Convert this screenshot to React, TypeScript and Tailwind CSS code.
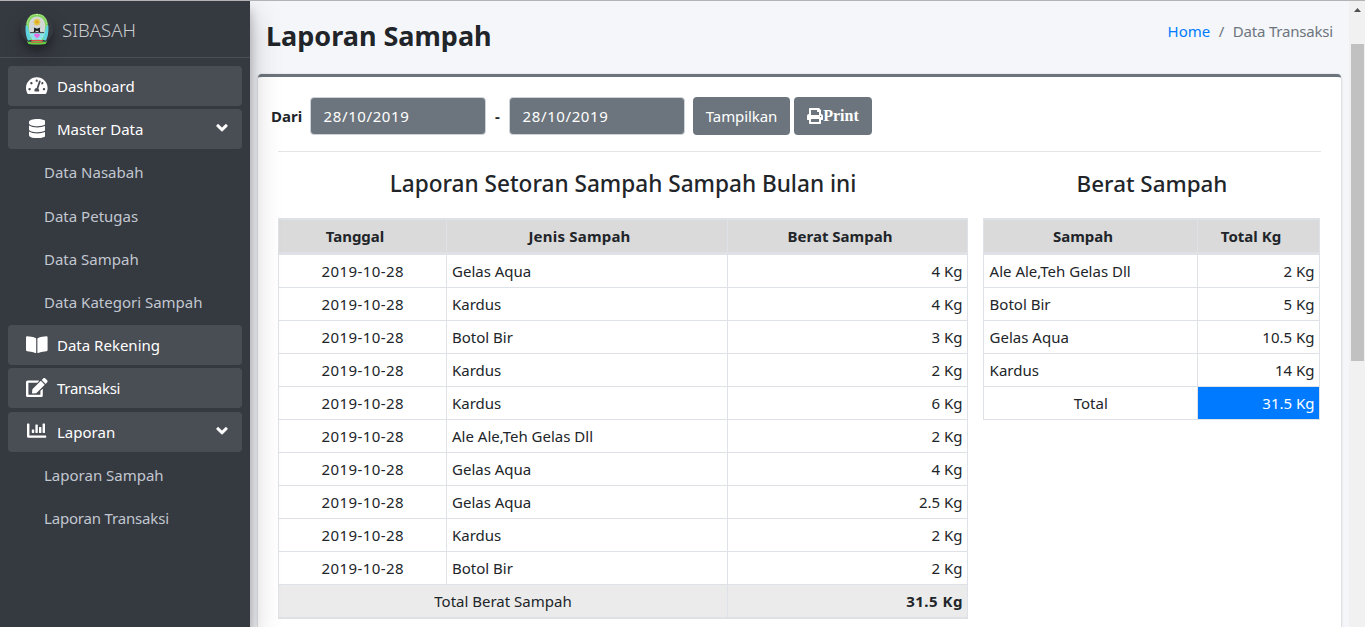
import type { ReactNode } from "react";
import { FaAngleDown, FaBookOpen, FaChartBar, FaDatabase, FaEdit, FaPrint, FaTachometerAlt } from "react-icons/fa";

const setoran: [string, string, string][] = [
  ["2019-10-28", "Gelas Aqua", "4 Kg"],
  ["2019-10-28", "Kardus", "4 Kg"],
  ["2019-10-28", "Botol Bir", "3 Kg"],
  ["2019-10-28", "Kardus", "2 Kg"],
  ["2019-10-28", "Kardus", "6 Kg"],
  ["2019-10-28", "Ale Ale,Teh Gelas Dll", "2 Kg"],
  ["2019-10-28", "Gelas Aqua", "4 Kg"],
  ["2019-10-28", "Gelas Aqua", "2.5 Kg"],
  ["2019-10-28", "Kardus", "2 Kg"],
  ["2019-10-28", "Botol Bir", "2 Kg"],
];

const berat: [string, string][] = [
  ["Ale Ale,Teh Gelas Dll", "2 Kg"],
  ["Botol Bir", "5 Kg"],
  ["Gelas Aqua", "10.5 Kg"],
  ["Kardus", "14 Kg"],
];

function Logo() {
  return (
    <svg viewBox="0 0 24 32" className="h-8 w-6">
      <path d="M12 .8C5.500.8 1.200 5.500 1.200 12.500V20l2.500 7h16.600l2.500-7v-7.500C22.800 5.500 18.500.8 12 .8z" fill="#7fd45a" />
      <path d="M12 1.500C6 1.500 2 6 2 12.500" fill="none" stroke="#d3efb0" strokeWidth="1" strokeDasharray="1 1.300" />
      <path d="M12 1.500c6 0 10 4.500 10 11" fill="none" stroke="#d3efb0" strokeWidth="1" strokeDasharray="1 1.300" />
      <path d="M.8 12c2.500 0 4.200 8 5 15l-2.800.5C1 24 0 17 .8 12zM23.200 12c-2.500 0-4.200 8-5 15l2.800.5c2-3.500 3-10.500 2.200-15.500z" fill="#5fd3df" />
      <path d="M12 3.500C7 3.500 3.800 7.500 3.800 13c0 5.500 1.700 9.500 3.700 12.500h9c2-3 3.700-7 3.700-12.500 0-5.500-3.200-9.500-8.200-9.500z" fill="#d3d8d6" />
      <path d="M4.300 20h15.400c-.7 3-2 5.500-3.700 7.500H8c-1.700-2-3-4.500-3.700-7.500z" fill="#8fe3ea" />
      <path d="M12 5l.9 1.800 1.900-.5-.5 1.900 1.800.9-1.800.9.5 1.900-1.900-.5-.9 1.800-.9-1.800-1.900.5.5-1.900-1.800-.9 1.800-.9-.5-1.900 1.900.5z" fill="#e6bd2e" />
      <circle cx="12" cy="9.100" r="1" fill="#d99a25" />
      <path d="M8.800 14.500l3.200 1.300 3.200-1.300-.4 1.800.4 2.700h-1.700l-.2-1.700-1.300 1-1.300-1-.2 1.700H8.800l.4-2.700z" fill="#151a1c" />
      <path d="M5 19.200h14v.9H5z" fill="#2a2e30" />
      <path d="M12 20.300l1.300.7 1.700.3-.5 2-2.500 2-2.500-2-.5-2 1.700-.3z" fill="#e86be4" />
      <path d="M6 27.300c3-.8 9-.8 12 0l-.8 1.700c-3-.6-7.400-.6-10.400 0z" fill="#e34a50" />
      <path d="M1.800 28c3.200 2 5.200-.3 10.200 0 5-.3 7 2 10.200 0l-1.700 3c-5 .7-12 .7-17 0z" fill="#62d344" />
      <path d="M6 29.300c4-.7 8-.7 12 0v.8c-4-.6-8-.6-12 0z" fill="#d65a4a" />
    </svg>
  );
}

function NavItem({ icon, label, caret }: { icon: ReactNode; label: ReactNode; caret?: boolean }) {
  return (
    <div className="mb-[3.2px] flex h-10 items-center rounded bg-[#494d54] pl-[18px] pr-[14px] text-white">
      <span className="-mt-px flex w-[22px] justify-center">{icon}</span>
      <span className="ml-[9px]">{label}</span>
      {caret && <FaAngleDown className="-mt-[2px] ml-auto h-[17.600px] w-[12px] stroke-white stroke-[12px]" />}
    </div>
  );
}

function SubItem({ label }: { label: ReactNode }) {
  return <div className="mb-[3.2px] flex h-10 items-center pl-9 text-[#c2c7d0]">{label}</div>;
}

const head = "flex items-center justify-center pl-[5px] pr-5 border-r border-[#dee2e6] font-bold pb-px";
const cell = "flex items-center border-r border-b border-[#dee2e6] pl-[5px] pr-[4.500px]";

export default function App() {
  return (
    <div className="relative flex h-[627px] w-full overflow-hidden bg-[#f4f6f9] font-['Noto_Sans','Open_Sans',sans-serif] text-[15px] leading-6 text-[#212529]">
      <div className="absolute inset-x-0 top-0 z-20 h-px bg-[#b3b3b5]" />

      <aside className="z-10 w-[250px] shrink-0 bg-[#353940] pt-px shadow-[0_14px_28px_rgba(0,0,0,0.25),0_10px_10px_rgba(0,0,0,0.22)]">
        <div className="flex h-[57px] items-center border-b border-[#4b4f56] pl-[21px]">
          <div className="-mt-px flex size-8 items-center justify-center rounded-full shadow-[0_10px_20px_rgba(0,0,0,0.19),0_6px_6px_rgba(0,0,0,0.23)]">
            <Logo />
          </div>
          <span className="ml-[9px] pt-[2px] text-[18.600px] font-[350] text-[#c9cbcd]">SIBASAH</span>
        </div>
        <nav className="px-2 pt-2">
          <NavItem icon={<FaTachometerAlt className="h-[19.200px] w-[21.600px]" />} label="Dashboard" />
          <NavItem icon={<FaDatabase className="h-[19.200px] w-[16.800px]" />} label="Master Data" caret />
          <SubItem label="Data Nasabah" />
          <SubItem label="Data Petugas" />
          <SubItem label="Data Sampah" />
          <SubItem label="Data Kategori Sampah" />
          <NavItem icon={<FaBookOpen className="h-[19.200px] w-[21.600px]" />} label="Data Rekening" />
          <NavItem icon={<FaEdit className="h-[19.200px] w-[21.600px]" />} label={<span className="tracking-[-0.3px]">Transaksi</span>} />
          <NavItem icon={<FaChartBar className="size-[19.200px]" />} label="Laporan" caret />
          <SubItem label="Laporan Sampah" />
          <SubItem label={<span className="tracking-[-0.18px]">Laporan Transaksi</span>} />
        </nav>
      </aside>

      <main className="flex flex-1 flex-col px-2 pt-px">
        <header className="flex h-[73px] shrink-0 justify-between pl-2 pr-[7px]">
          <h1 className="pt-[15px] text-[27px] leading-10 font-bold">Laporan Sampah</h1>
          <div className="flex pt-[18px]">
            <a className="text-[#007bff]">Home</a>
            <span className="px-[8.500px] text-[#6c757d]">/</span>
            <span className="pr-px tracking-[-0.2px] text-[#6c757d]">Data Transaksi</span>
          </div>
        </header>

        <section className="w-[1083px] flex-1 rounded-t border-t-[3px] border-[#6c757d] bg-white pl-[13px] shadow-[0_0_1px_rgba(0,0,0,0.125),0_1px_3px_rgba(0,0,0,0.2)]">
          <div className="flex h-[74px] items-center pt-[3px]">
            <span className="w-[39px] font-bold">Dari</span>
            <div className="flex h-[38px] w-[176px] items-center rounded border border-[#ced4da] bg-[#6c757d] pl-[12.600px] tracking-[0.6px] text-white">28/10/2019</div>
            <span className="w-[23px] pl-[9px] font-bold">-</span>
            <div className="flex h-[38px] w-[176px] items-center rounded border border-[#ced4da] bg-[#6c757d] pl-[12.600px] tracking-[0.6px] text-white">28/10/2019</div>
            <button className="ml-2 h-[38px] w-[97px] rounded bg-[#6c757d] tracking-[-0.1px] text-white">Tampilkan</button>
            <button className="ml-1 flex h-[38px] w-[78px] items-center justify-center rounded bg-[#6c757d] font-['Liberation_Serif',serif] text-[16px] font-bold text-white">
              <FaPrint className="size-4" />
              Print
            </button>
          </div>

          <div className="ml-[7px] w-[1043px] border-t border-[#e5e5e5]">
            <div className="flex gap-[15px]">
              <div className="w-[690px]">
                <h2 className="h-[66px] pt-[17px] text-center text-[22.600px] leading-[30px] font-medium">Laporan Setoran Sampah Sampah Bulan ini</h2>
                <div className="grid h-[37px] grid-cols-[168px_281px_240px] border-t-2 border-b-[3px] border-l border-[#dee2e6] bg-[#dadada]">
                  <div className={head}>Tanggal</div>
                  <div className={head}><span className="tracking-[0.2px]">Jenis Sampah</span></div>
                  <div className={head}>Berat Sampah</div>
                </div>
                {setoran.map(([tanggal, jenis, kg], i) => (
                  <div key={i} className="grid h-[33px] grid-cols-[168px_281px_240px] border-l border-[#dee2e6]">
                    <div className={`${cell} justify-center tracking-[0.4px]`}>{tanggal}</div>
                    <div className={cell}>{jenis}</div>
                    <div className={`${cell} justify-end`}>{kg}</div>
                  </div>
                ))}
                <div className="grid h-[34px] grid-cols-[449px_240px] border-b-2 border-l border-[#dee2e6] bg-[#ebebeb]">
                  <div className="flex items-center justify-center border-r border-[#dee2e6]">Total Berat Sampah</div>
                  <div className="flex items-center justify-end border-r border-[#dee2e6] pr-1 font-bold tracking-[0.5px]">31.5 Kg</div>
                </div>
              </div>

              <div className="w-[337px]">
                <h2 className="h-[66px] pt-[17px] pl-px text-center text-[22.400px] leading-[30px] font-medium">Berat Sampah</h2>
                <div className="grid h-[37px] grid-cols-[214px_122px] border-t-2 border-b-[3px] border-l border-[#dee2e6] bg-[#dadada]">
                  <div className={head}>Sampah</div>
                  <div className={head}>Total Kg</div>
                </div>
                {berat.map(([nama, kg]) => (
                  <div key={nama} className="grid h-[33px] grid-cols-[214px_122px] border-l border-[#dee2e6]">
                    <div className={cell}><span className="pl-[0.600px]">{nama}</span></div>
                    <div className={`${cell} justify-end`}>{kg}</div>
                  </div>
                ))}
                <div className="grid h-[33px] grid-cols-[214px_122px] border-l border-[#dee2e6]">
                  <div className={`${cell} justify-center`}>Total</div>
                  <div className={`${cell} justify-end bg-[#007bff] bg-clip-padding text-white`}>31.5 Kg</div>
                </div>
              </div>
            </div>
          </div>
        </section>
      </main>

      <div className="flex w-4 shrink-0 flex-col items-center bg-[#f1f1f1] pt-px">
        <div className="flex h-[43px] justify-center pt-[7px]">
          <svg viewBox="0 0 7 4" className="h-1 w-[7px]">
            <path d="M3.500 0L7 4H0z" fill="#505050" />
          </svg>
        </div>
        <div className="h-[317px] w-[13px] bg-[#c1c1c1]" />
      </div>
    </div>
  );
}
